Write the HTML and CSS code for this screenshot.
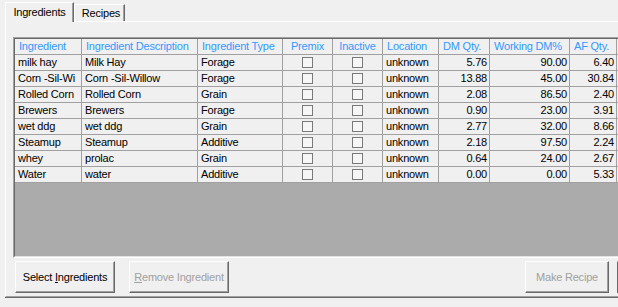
FILE: index.html
```html
<!DOCTYPE html>
<html lang="en">
<head>
  <meta charset="UTF-8">
  <title>Ingredients</title>
  <link rel="stylesheet" href="styles.css">
</head>
<body>
  <div class="tabs">
    <div class="tab tab-active">Ingredients</div>
    <div class="tab">Recipes</div>
  </div>

  <div class="panel">
    <div class="grid">
      <div class="grid-inner">
        <table>
          <tr class="head">
            <td class="c1">Ingredient</td>
            <td class="c2">Ingredient Description</td>
            <td class="c3">Ingredient Type</td>
            <td class="c4 mid">Premix</td>
            <td class="c5 mid">Inactive</td>
            <td class="c6">Location</td>
            <td class="c7">DM Qty.</td>
            <td class="c8">Working DM%</td>
            <td class="c9">AF Qty.</td>
            <td class="c10"></td>
          </tr>
          <tr>
            <td>milk hay</td><td>Milk Hay</td><td>Forage</td>
            <td class="mid"><span class="check"></span></td><td class="mid"><span class="check"></span></td>
            <td>unknown</td><td class="num">5.76</td><td class="num">90.00</td><td class="num">6.40</td><td></td>
          </tr>
          <tr>
            <td>Corn -Sil-Wi</td><td>Corn -Sil-Willow</td><td>Forage</td>
            <td class="mid"><span class="check"></span></td><td class="mid"><span class="check"></span></td>
            <td>unknown</td><td class="num">13.88</td><td class="num">45.00</td><td class="num">30.84</td><td></td>
          </tr>
          <tr>
            <td>Rolled Corn</td><td>Rolled Corn</td><td>Grain</td>
            <td class="mid"><span class="check"></span></td><td class="mid"><span class="check"></span></td>
            <td>unknown</td><td class="num">2.08</td><td class="num">86.50</td><td class="num">2.40</td><td></td>
          </tr>
          <tr>
            <td>Brewers</td><td>Brewers</td><td>Forage</td>
            <td class="mid"><span class="check"></span></td><td class="mid"><span class="check"></span></td>
            <td>unknown</td><td class="num">0.90</td><td class="num">23.00</td><td class="num">3.91</td><td></td>
          </tr>
          <tr>
            <td>wet ddg</td><td>wet ddg</td><td>Grain</td>
            <td class="mid"><span class="check"></span></td><td class="mid"><span class="check"></span></td>
            <td>unknown</td><td class="num">2.77</td><td class="num">32.00</td><td class="num">8.66</td><td></td>
          </tr>
          <tr>
            <td>Steamup</td><td>Steamup</td><td>Additive</td>
            <td class="mid"><span class="check"></span></td><td class="mid"><span class="check"></span></td>
            <td>unknown</td><td class="num">2.18</td><td class="num">97.50</td><td class="num">2.24</td><td></td>
          </tr>
          <tr>
            <td>whey</td><td>prolac</td><td>Grain</td>
            <td class="mid"><span class="check"></span></td><td class="mid"><span class="check"></span></td>
            <td>unknown</td><td class="num">0.64</td><td class="num">24.00</td><td class="num">2.67</td><td></td>
          </tr>
          <tr>
            <td>Water</td><td>water</td><td>Additive</td>
            <td class="mid"><span class="check"></span></td><td class="mid"><span class="check"></span></td>
            <td>unknown</td><td class="num">0.00</td><td class="num">0.00</td><td class="num">5.33</td><td></td>
          </tr>
        </table>
      </div>
    </div>

    <div class="actions">
      <button class="btn btn-select">Select <u>I</u>ngredients</button>
      <button class="btn btn-remove" disabled><u>R</u>emove Ingredient</button>
      <button class="btn btn-make" disabled>Make Recipe</button>
      <button class="btn btn-edge"></button>
    </div>
  </div>
</body>
</html>
```

FILE: styles.css
```css
body{
  margin: 0;
  width: 618px;
  height: 307px;
  overflow: hidden;
  background: #f0f0f0;
  font-family: "Liberation Sans", Arial, sans-serif;
  font-size: 11px;
  letter-spacing: -0.2px;
  color: #000;
}

/* tabs */
.tabs{
  display: flex;
  height: 19px;
  padding: 2px 0 0 5px;
}
.tab{
  box-sizing: border-box;
  border-left: 1px solid #fff;
  border-top: 1px solid #fff;
  border-right: 1px solid #696969;
  box-shadow: inset -1px 0 0 #a0a0a0;
  text-align: center;
  line-height: 13px;
  background: #f0f0f0;
}
.tab-active{
  position: relative;
  z-index: 1;
  width: 69px;
  height: 20px;
  padding-top: 3px;
}
.tab:not(.tab-active){
  width: 51px;
  height: 17px;
  margin-top: 2px;
  padding-top: 2px;
  padding-left: 3px;
}

/* panel */
.panel{
  width: 700px;
  margin-left: 5px;
  border-left: 1px solid #fff;
  border-top: 1px solid #fff;
  border-bottom: 1px solid #a0a0a0;
  box-shadow: 0 1px 0 #696969;
  padding: 15px 0 3px 7px;
}

.grid{
  width: 680px;
  height: 221px;
  box-sizing: border-box;
  border: 1px solid;
  border-color: #a0a0a0 #fff #fff #a0a0a0;
}
.grid-inner{
  height: 100%;
  box-sizing: border-box;
  border: 1px solid;
  border-color: #696969 #e3e3e3 #e3e3e3 #696969;
  background: #ababab;
  overflow: hidden;
}

table{
  border-collapse: separate;
  border-spacing: 0;
  table-layout: fixed;
  width: 662px;
  background: #f0f0f0;
}
td{
  box-sizing: border-box;
  height: 16px;
  padding: 0 3px;
  line-height: 15px;
  white-space: nowrap;
  overflow: hidden;
  border-right: 1px solid #a0a0a0;
  border-bottom: 1px solid #a0a0a0;
}
.head td{
  color: #3399ff;
  padding-left: 4px;
}
.c1{ width: 67px; }
.c2{ width: 116px; }
.c3{ width: 85px; }
.c4{ width: 50px; }
.c5{ width: 50px; }
.c6{ width: 56px; }
.c7{ width: 51px; }
.c8{ width: 80px; }
.c9{ width: 47px; }
.c10{ width: 60px; }
td.mid{
  text-align: center;
  padding: 0;
}
.head td.mid{
  padding: 0;
}
td.num{
  text-align: right;
  padding-right: 2px;
}
.check{
  display: inline-block;
  box-sizing: border-box;
  width: 11px;
  height: 11px;
  border: 1px solid #7a7a7a;
  background: #f6f6f6;
  vertical-align: -2px;
}

/* buttons */
.actions{
  display: flex;
  margin-top: 3px;
}
.btn{
  box-sizing: border-box;
  height: 32px;
  padding: 0;
  border: 1px solid;
  border-color: #fff #696969 #696969 #fff;
  box-shadow: inset -1px -1px 0 #a0a0a0;
  background: #f0f0f0;
  font: inherit;
  letter-spacing: inherit;
  color: #000;
  text-align: center;
}
.btn:disabled{
  color: #a0a0a0;
}
.btn-select{
  width: 100px;
  margin-left: 2px;
}
.btn-remove{
  width: 100px;
  margin-left: 14px;
}
.btn-make{
  width: 84px;
  margin-left: 296px;
}
.btn-edge{
  width: 60px;
  margin-left: 8px;
  border-left-color: #696969;
}
```
